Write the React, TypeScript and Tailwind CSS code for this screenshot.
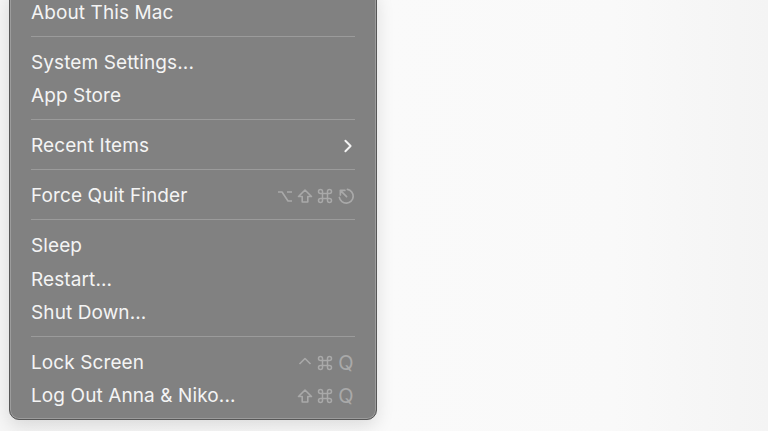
import type { ReactNode } from "react"

const glyph = "w-[16px] h-[16px] shrink-0"

function OptionKey() {
  return (
    <svg viewBox="0 0 16 16" className={glyph} fill="none" stroke="currentColor" strokeWidth="1.6" strokeLinejoin="round">
      <path d="M1 4 H5 L11 13 H15 M10 4 H15" />
    </svg>
  )
}

function ShiftKey() {
  return (
    <svg viewBox="0 0 16 16" className={glyph} fill="none" stroke="currentColor" strokeWidth="1.6" strokeLinejoin="round">
      <path d="M8 2 L14.5 8.5 H10.8 V14 H5.2 V8.5 H1.5 Z" />
    </svg>
  )
}

function CommandKey() {
  return (
    <svg viewBox="0 0 16 16" className={glyph} fill="none" stroke="currentColor" strokeWidth="1.5">
      <path d="M5.5 5.5 V3.5 A2 2 0 1 0 3.5 5.5 H12.5 A2 2 0 1 0 10.5 3.5 V12.5 A2 2 0 1 0 12.5 10.5 H3.5 A2 2 0 1 0 5.5 12.5 Z" />
    </svg>
  )
}

function EscapeKey() {
  return (
    <svg viewBox="0 0 16 16" className="w-[18px] h-[18px] shrink-0" fill="none" stroke="currentColor" strokeWidth="1.5" strokeLinecap="round" strokeLinejoin="round">
      <path d="M9.3 2.1 A6.2 6.2 0 1 1 2.1 9.3" />
      <path d="M3 7 V3 H7 M3 3 L8.5 8.5" />
    </svg>
  )
}

function ControlKey() {
  return (
    <svg viewBox="0 0 16 16" className={glyph} fill="none" stroke="currentColor" strokeWidth="1.6" strokeLinejoin="round">
      <path d="M2.5 9 L8 3.5 L13.5 9" />
    </svg>
  )
}

function Chevron() {
  return (
    <svg viewBox="0 0 16 16" className="w-[14px] h-[14px] text-[#f4f4f4]" fill="none" stroke="currentColor" strokeWidth="2.2" strokeLinecap="round" strokeLinejoin="round">
      <path d="M5 2 L11 8 L5 14" />
    </svg>
  )
}

function Q() {
  return <span className="w-[18px] text-center text-[20px] leading-none">Q</span>
}

function Item({ label, right }: { label: string; right?: ReactNode }) {
  return (
    <div className="h-[33.33px] pt-[4px] flex items-center justify-between">
      <span className="text-[19px] text-[#f4f4f4] tracking-[0.1px]">{label}</span>
      {right && <span className="flex items-center gap-[4px] text-[#a9a9a9]">{right}</span>}
    </div>
  )
}

function Separator() {
  return (
    <div className="h-[16.67px] flex items-center">
      <div className="h-px w-full bg-[#9b9b9b]" />
    </div>
  )
}

export default function App() {
  return (
    <div
      className="h-[431px] overflow-hidden bg-[linear-gradient(to_right,#f6f6f6,#fafafa_50%,#f9f9f9_80%,#f4f4f4)]"
      style={{ fontFamily: "Inter, 'Noto Sans', sans-serif" }}
    >
      <div className="ml-[9px] mt-[-12px] w-[368px] rounded-[10px] border border-[#575757] bg-[#818181] px-[21px] pt-[5.5px] pb-[8px] shadow-[inset_0_0_0_1px_#9c9c9c,0_6px_18px_rgba(0,0,0,0.12)]">
        <Item label="About This Mac" />
        <Separator />
        <Item label="System Settings..." />
        <Item label="App Store" />
        <Separator />
        <Item label="Recent Items" right={<Chevron />} />
        <Separator />
        <Item
          label="Force Quit Finder"
          right={
            <>
              <OptionKey />
              <ShiftKey />
              <CommandKey />
              <EscapeKey />
            </>
          }
        />
        <Separator />
        <Item label="Sleep" />
        <Item label="Restart..." />
        <Item label="Shut Down..." />
        <Separator />
        <Item
          label="Lock Screen"
          right={
            <>
              <ControlKey />
              <CommandKey />
              <Q />
            </>
          }
        />
        <Item
          label="Log Out Anna & Niko..."
          right={
            <>
              <ShiftKey />
              <CommandKey />
              <Q />
            </>
          }
        />
      </div>
    </div>
  )
}
